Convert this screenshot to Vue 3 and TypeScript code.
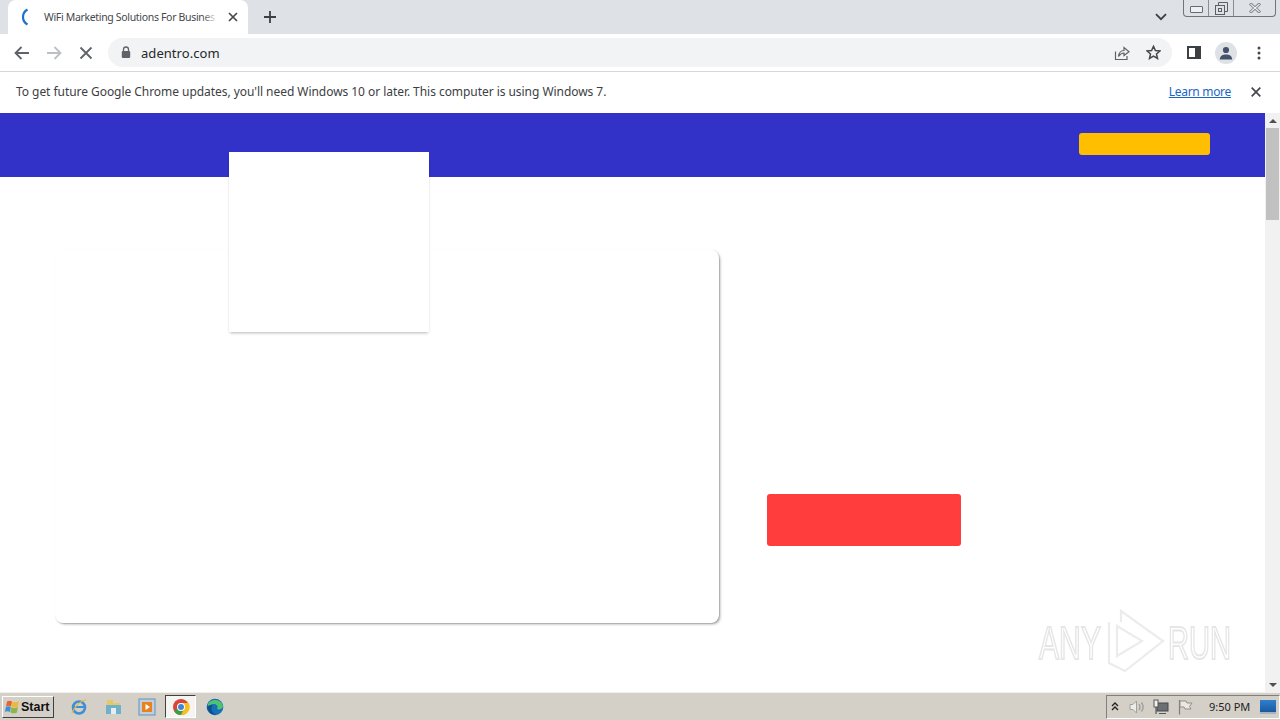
<script setup lang="ts">
const notice = "To get future Google Chrome updates, you'll need Windows 10 or later. This computer is using Windows 7."
</script>

<template>
  <div class="screen">
    <div class="tabstrip">
      <div class="tab">
        <svg class="spinner" width="16" height="20" viewBox="0 0 16 20"><path d="M9.5 2.5 A8.5 8.5 0 0 0 9.5 17.5" fill="none" stroke="#1a73c8" stroke-width="2.2" /></svg>
        <span class="tab-title">WiFi Marketing Solutions For Busines</span>
        <div class="tab-fade"></div>
        <svg class="tab-close" width="10" height="10" viewBox="0 0 10 10"><path d="M1 1 9 9M9 1 1 9" stroke="#45484c" stroke-width="1.7" /></svg>
      </div>
      <svg class="new-tab" width="12" height="12" viewBox="0 0 12 12"><path d="M6 0V12M0 6H12" stroke="#3c4043" stroke-width="1.8" /></svg>
      <div class="strip-space"></div>
      <svg class="tab-menu" width="12" height="8" viewBox="0 0 12 8"><path d="M1 1.2 6 6.2 11 1.2" fill="none" stroke="#3c4043" stroke-width="1.8" /></svg>
      <div class="win-buttons">
        <div class="win-btn min"><span class="min-glyph"></span></div>
        <div class="win-btn restore">
          <svg width="13" height="13" viewBox="0 0 13 13"><path d="M3.5 3V.5H12.5V9.5H10" fill="none" stroke="#5a5f66" /><rect x=".5" y="3.5" width="9" height="9" fill="none" stroke="#5a5f66" /><rect x="3.5" y="6.5" width="3" height="3" fill="none" stroke="#5a5f66" /></svg>
        </div>
        <div class="win-btn close">
          <svg width="12" height="10" viewBox="0 0 12 10"><path d="M1 .5 11 9.5M11 .5 1 9.5" stroke="#75797f" stroke-width="3" /><path d="M1.5 1 10.5 9M10.5 1 1.5 9" stroke="#f1f2f4" stroke-width="1.1" /></svg>
        </div>
      </div>
    </div>

    <div class="toolbar">
      <svg class="nav" width="16" height="14" viewBox="0 0 16 14"><path d="M15 7H2M7.5 1 1.5 7 7.5 13" fill="none" stroke="#5f6368" stroke-width="1.8" /></svg>
      <svg class="nav forward" width="16" height="14" viewBox="0 0 16 14"><path d="M1 7H14M8.5 1 14.5 7 8.5 13" fill="none" stroke="#bcbfc4" stroke-width="1.8" /></svg>
      <svg class="nav stop" width="14" height="14" viewBox="0 0 14 14"><path d="M1.5 1.5 12.5 12.5M12.5 1.5 1.5 12.5" stroke="#5f6368" stroke-width="1.8" /></svg>
      <div class="omnibox">
        <svg class="lock" width="10" height="13" viewBox="0 0 10 13"><path d="M2.5 5V3.5a2.5 2.5 0 0 1 5 0V5" fill="none" stroke="#5f6368" stroke-width="1.3" /><rect x=".8" y="5" width="8.4" height="7" rx="1" fill="#5f6368" /></svg>
        <span class="url">adentro.com</span>
        <div class="omni-space"></div>
        <svg width="16" height="16" viewBox="0 0 16 16"><path d="M1.5 6.5V14.5H13V11" fill="none" stroke="#5f6368" stroke-width="1.2" /><path d="M4.5 11.5C5 7.5 7.5 5.5 10 5.5V2.5L15 6.8 10 10.5V8C7.8 8 6 9.3 4.5 11.5Z" fill="none" stroke="#5f6368" stroke-width="1.2" /></svg>
        <svg class="star" width="15" height="15" viewBox="0 0 15 15"><path d="M7.5 1.3 9.4 5.5 13.9 6 10.5 9 11.5 13.5 7.5 11.2 3.5 13.5 4.5 9 1.1 6 5.6 5.5Z" fill="none" stroke="#45484c" stroke-width="1.5" /></svg>
      </div>
      <svg class="panel" width="14" height="13" viewBox="0 0 14 13"><rect x="1" y="1" width="12" height="11" fill="#fff" stroke="#3c4043" stroke-width="2" /><rect x="8" y="1" width="5" height="11" fill="#3c4043" /></svg>
      <div class="avatar">
        <svg width="14" height="14" viewBox="0 0 14 14"><circle cx="7" cy="4" r="3.1" fill="#45506a" /><path d="M.8 13.5C.8 9.8 4 8.5 7 8.5s6.2 1.3 6.2 5Z" fill="#45506a" /></svg>
      </div>
      <svg class="dots" width="4" height="14" viewBox="0 0 4 14"><circle cx="2" cy="2" r="1.5" fill="#45484c" /><circle cx="2" cy="7" r="1.5" fill="#45484c" /><circle cx="2" cy="12" r="1.5" fill="#45484c" /></svg>
    </div>

    <div class="infobar">
      <span class="notice">{{ notice }}</span>
      <div class="strip-space"></div>
      <a class="learn">Learn more</a>
      <svg class="info-close" width="10" height="10" viewBox="0 0 10 10"><path d="M.7.7 9.3 9.3M9.3.7.7 9.3" stroke="#45484c" stroke-width="1.7" /></svg>
    </div>

    <div class="viewport">
      <div class="page">
        <header class="hero-bar">
          <div class="cta-yellow"></div>
        </header>
        <section class="content">
          <div class="card"></div>
          <div class="cta-red"></div>
        </section>
        <div class="logo-box"></div>
        <svg class="watermark" width="204" height="66" viewBox="0 0 204 66">
          <text x="2" y="51" class="wm-text" textLength="62" lengthAdjust="spacingAndGlyphs">ANY</text>
          <g fill="none" stroke="#ececec" stroke-width="2.2">
            <path d="M72 14V55L88 63 126 33 84 3V14" />
            <path d="M80 18V48L105 33Z" />
          </g>
          <text x="131" y="51" class="wm-text" textLength="63" lengthAdjust="spacingAndGlyphs">RUN</text>
        </svg>
      </div>
      <div class="scrollbar">
        <div class="arrow-btn"><span class="tri-up"></span></div>
        <div class="thumb"></div>
        <div class="track"></div>
        <div class="arrow-btn"><span class="tri-down"></span></div>
      </div>
    </div>

    <footer class="taskbar">
      <div class="start">
        <svg width="16" height="16" viewBox="0 0 16 16"><path d="M3 2.5C5 1.3 6.5 1.5 8 2.5L7 7.5C5.5 6.5 3.5 6.5 2 7.5Z" fill="#e8622c" /><path d="M8.5 2.5C10.5 3.5 12.5 3.5 15 2L14 7.5C11.5 8.8 9.5 8.8 7.5 7.8Z" fill="#f0b83a" /><path d="M1.8 8C3.5 7 5.3 7 6.8 8L6 13C4.5 12 2.5 12 1 13Z" fill="#3f8fd8" /><path d="M7.3 8.3C9.3 9.3 11.5 9.3 13.8 8L13 13.5C10.5 14.8 8.5 14.5 6.5 13.5Z" fill="#8bb74a" /></svg>
        <span>Start</span>
      </div>
      <div class="quick">
        <svg class="q" width="18" height="18" viewBox="0 0 18 18"><circle cx="9" cy="9.5" r="6" fill="none" stroke="#3d8fd6" stroke-width="2.6" /><path d="M4 9H14" stroke="#3d8fd6" stroke-width="2" /><path d="M2 15C4 9 10 3 16 1.5" fill="none" stroke="#e5b93a" stroke-width="1.2" /></svg>
        <svg class="q" width="18" height="18" viewBox="0 0 18 18"><path d="M3 2H9V5H16V16H3Z" fill="#e8c860" /><rect x="2" y="7" width="15" height="9" fill="#6fb0cc" /><rect x="7" y="10" width="5" height="6" fill="#e6edf0" /></svg>
        <svg class="q" width="18" height="18" viewBox="0 0 18 18"><rect x="1" y="1" width="16" height="16" fill="#bcd0e2" stroke="#6b8fb3" /><rect x="4" y="4" width="10" height="10" fill="#e8821e" /><path d="M7.5 6 12 9 7.5 12Z" fill="#fff" /></svg>
        <div class="chrome-slot">
          <svg width="18" height="18" viewBox="0 0 18 18"><circle cx="9" cy="9" r="8" fill="#d8453a" /><path d="M9 9 2 13A8 8 0 0 0 9 17L13 9Z" fill="#3d9e4a" /><path d="M9 5H16.6A8 8 0 0 1 9 17L13 9Z" fill="#f3c220" /><circle cx="9" cy="9" r="4" fill="#fff" /><circle cx="9" cy="9" r="3" fill="#4285d4" /></svg>
        </div>
        <svg class="q edge" width="18" height="18" viewBox="0 0 18 18"><circle cx="9" cy="9" r="8.3" fill="#1570b8" /><path d="M2 6C5 0 15 .5 17 8 17 11 13 12 11 11 13 8 10 5.5 7.5 6 5 6.5 3 8 2 10Z" fill="#4fc46e" /><path d="M7 7C4.5 9 5 15 10 16.5 6 17.5 1.5 14 1 9 2 7.5 5 6 7 7Z" fill="#0d4f8f" /></svg>
      </div>
      <div class="strip-space"></div>
      <div class="tray">
        <svg width="8" height="9" viewBox="0 0 8 9"><path d="M1 4 4 1 7 4M1 8 4 5 7 8" fill="none" stroke="#222" stroke-width="1.4" /></svg>
        <svg class="tray-speaker" width="16" height="16" viewBox="0 0 16 16"><path d="M1 5.5H4L7.5 2V14L4 10.5H1Z" fill="#eeece6" stroke="#a0a09e" /><path d="M10 5C11.2 6.8 11.2 9.2 10 11M12.5 3.5C14.5 6.2 14.5 9.8 12.5 12.5" fill="none" stroke="#9a9a98" stroke-width="1.3" /></svg>
        <svg class="tray-net" width="16" height="16" viewBox="0 0 16 16"><rect x="4" y="4" width="11" height="8" fill="#6d7072" stroke="#45484a" /><rect x="1" y="1" width="4" height="7" fill="#f2f0ea" stroke="#55585a" /><path d="M6 14.5H13M3 8V15" stroke="#55585a" stroke-width="1.2" /></svg>
        <svg class="tray-flag" width="16" height="16" viewBox="0 0 16 16"><path d="M2.5 1V15.5" stroke="#7d7d7b" stroke-width="1.2" /><path d="M3 2H9L10 4H15L12.5 7.5 14 10H8L7 8H3Z" fill="#ebe8e0" stroke="#8f8f8d" /></svg>
        <span class="clock">9:50 PM</span>
        <div class="show-desktop"></div>
      </div>
    </footer>
  </div>
</template>

<style scoped>
.screen {
  width: 1280px;
  height: 720px;
  display: flex;
  flex-direction: column;
  overflow: hidden;
  font-family: "Noto Sans", "Open Sans", sans-serif;
  background: #fff;
}

.tabstrip {
  height: 34px;
  flex: none;
  display: flex;
  align-items: flex-start;
  background: #dee1e6;
  padding-left: 8px;
}

.tab {
  width: 240px;
  height: 34px;
  display: flex;
  align-items: center;
  position: relative;
  background: #fff;
  border-radius: 8px 8px 0 0;
  padding-left: 10px;
  box-sizing: border-box;
}

.spinner {
  flex: none;
}

.tab-title {
  margin-left: 10px;
  width: 178px;
  white-space: nowrap;
  font-size: 10.5px;
  letter-spacing: -0.33px;
  color: #45484c;
}

.tab-fade {
  position: absolute;
  left: 194px;
  top: 8px;
  width: 16px;
  height: 20px;
  background: linear-gradient(to right, rgba(255, 255, 255, 0), #fff);
}

.tab-close {
  margin-left: 6px;
  flex: none;
}

.new-tab {
  margin: 11px 0 0 16px;
}

.strip-space {
  flex: 1;
}

.tab-menu {
  margin-top: 13px;
  margin-right: 16px;
}

.win-buttons {
  width: 93px;
  height: 17px;
  margin-right: 4px;
  display: flex;
  box-sizing: border-box;
  border: 1px solid #70757a;
  border-top: none;
  border-radius: 0 0 4px 4px;
}

.win-btn {
  display: flex;
  align-items: center;
  justify-content: center;
  box-sizing: border-box;
}

.min {
  width: 25px;
  border-right: 1px solid #8a8e94;
}

.min-glyph {
  width: 11px;
  height: 5px;
  margin-top: 3px;
  border: 1px solid #666b70;
  border-radius: 1px;
  background: #eef0f2;
}

.restore {
  width: 25px;
  border-right: 1px solid #8a8e94;
}

.close {
  flex: 1;
}

.toolbar {
  height: 37px;
  flex: none;
  display: flex;
  align-items: center;
  background: #fff;
  border-bottom: 1px solid #d5d7da;
  padding-left: 14px;
}

.nav {
  margin-right: 16px;
  flex: none;
}

.forward {
  margin-right: 17px;
}

.stop {
  margin-right: 15px;
}

.omnibox {
  width: 1064px;
  height: 29px;
  display: flex;
  align-items: center;
  background: #f1f3f4;
  border-radius: 15px;
  box-sizing: border-box;
  padding-left: 13px;
  padding-right: 11px;
}

.url {
  margin-left: 10px;
  font-size: 13px;
  letter-spacing: 0.05px;
  color: #26282b;
}

.omni-space {
  flex: 1;
}

.star {
  margin-left: 16px;
}

.panel {
  margin-left: 15px;
  flex: none;
}

.avatar {
  width: 22px;
  height: 22px;
  margin-left: 14px;
  border-radius: 50%;
  background: #dee1e6;
  display: flex;
  align-items: center;
  justify-content: center;
  flex: none;
}

.dots {
  margin-left: 20px;
  flex: none;
}

.infobar {
  height: 41px;
  flex: none;
  display: flex;
  align-items: center;
  background: #fff;
  padding: 0 19px 2px 16px;
  box-sizing: border-box;
}

.notice {
  font-size: 12px;
  letter-spacing: -0.05px;
  color: #3c4043;
}

.learn {
  font-size: 12px;
  letter-spacing: -0.3px;
  color: #1a66c4;
  text-decoration: underline;
  margin-right: 20px;
}

.viewport {
  height: 579px;
  flex: none;
  display: flex;
}

.page {
  flex: 1;
  position: relative;
  background: #fff;
}

.hero-bar {
  height: 64px;
  background: #3232c8;
  display: flex;
  justify-content: flex-end;
  align-items: flex-start;
  padding: 20px 55px 0 0;
  box-sizing: border-box;
}

.cta-yellow {
  width: 131px;
  height: 22px;
  background: #ffbf00;
  border-radius: 3px;
}

.logo-box {
  position: absolute;
  left: 229px;
  top: 39px;
  width: 200px;
  height: 180px;
  background: #fff;
  box-shadow: 0 2px 3px -1px rgba(0, 0, 0, 0.28), 0 0 2px rgba(0, 0, 0, 0.03);
}

.content {
  display: flex;
  align-items: flex-start;
  padding: 73px 0 0 55px;
}

.card {
  width: 664px;
  height: 373px;
  background: #fff;
  border-radius: 8px;
  box-shadow: 2px 2px 3px -1px rgba(0, 0, 0, 0.35), 0 1px 1px rgba(0, 0, 0, 0.1), 1px 0 1px rgba(0, 0, 0, 0.1);
}

.cta-red {
  width: 194px;
  height: 52px;
  margin: 244px 0 0 48px;
  background: #ff3d3d;
  border-radius: 3px;
}

.watermark {
  position: absolute;
  left: 1037px;
  top: 495px;
  overflow: visible;
  filter: blur(0.5px);
}

.wm-text {
  font-family: "Liberation Sans", Arial, sans-serif;
  font-size: 47px;
  fill: #fff;
  stroke: #e6e6e6;
  stroke-width: 2px;
}

.scrollbar {
  width: 15px;
  flex: none;
  display: flex;
  flex-direction: column;
  background: #f1f1f1;
}

.arrow-btn {
  height: 15px;
  display: flex;
  align-items: center;
  justify-content: center;
  flex: none;
}

.tri-up {
  border: 4px solid transparent;
  border-top: none;
  border-bottom: 4px solid #505050;
}

.tri-down {
  border: 4px solid transparent;
  border-bottom: none;
  border-top: 4px solid #505050;
}

.thumb {
  height: 92px;
  margin: 0 1px;
  background: #c1c1c1;
  flex: none;
}

.track {
  flex: 1;
}

.taskbar {
  flex: 1;
  display: flex;
  align-items: center;
  background: #d4d0c8;
  border-top: 1px solid #f2f0ea;
  box-sizing: border-box;
}

.start {
  width: 52px;
  height: 22px;
  margin-left: 2px;
  display: flex;
  align-items: center;
  gap: 1px;
  box-sizing: border-box;
  padding-left: 1px;
  background: #d4d0c8;
  border: 1px solid;
  border-color: #fff #404040 #404040 #fff;
  font-family: "Liberation Sans", Arial, sans-serif;
  font-size: 12.5px;
  font-weight: 700;
  color: #111;
}

.quick {
  display: flex;
  align-items: center;
  margin-left: 8px;
}

.q {
  margin: 0 8px;
}

.chrome-slot {
  width: 31px;
  height: 23px;
  margin: 0 1px;
  display: flex;
  align-items: center;
  justify-content: center;
  background: #f5f4f1;
  border: 1px solid;
  border-color: #404040 #fff #fff #404040;
  box-sizing: border-box;
}

.edge {
  margin-left: 9px;
}

.tray {
  width: 174px;
  height: 24px;
  display: flex;
  align-items: center;
  box-sizing: border-box;
  border: 1px solid;
  border-color: #808080 #fff #fff #808080;
  padding-left: 4px;
}

.tray-speaker {
  margin-left: 10px;
}

.tray-net {
  margin-left: 8px;
}

.tray-flag {
  margin-left: 8px;
}

.clock {
  margin-left: 16px;
  font-size: 11px;
  color: #222;
  white-space: nowrap;
}

.show-desktop {
  width: 16px;
  height: 12px;
  margin-left: auto;
  margin-right: 3px;
  background: linear-gradient(#2f7fd0, #1a5a9e);
  border-bottom: 2px solid #a7b4bf;
}
</style>

<style>
html,
body {
  margin: 0;
  overflow: hidden;
}
</style>
